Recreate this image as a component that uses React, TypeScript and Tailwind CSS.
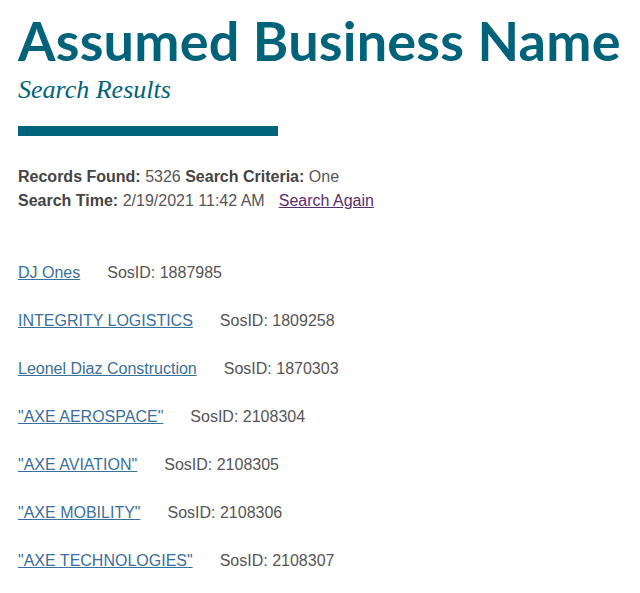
const results = [
  { name: "DJ Ones", id: "1887985" },
  { name: "INTEGRITY LOGISTICS", id: "1809258" },
  { name: "Leonel Diaz Construction", id: "1870303" },
  { name: '"AXE AEROSPACE"', id: "2108304" },
  { name: '"AXE AVIATION"', id: "2108305" },
  { name: '"AXE MOBILITY"', id: "2108306" },
  { name: '"AXE TECHNOLOGIES"', id: "2108307" },
];

export default function App() {
  return (
    <div className="min-h-[593px] bg-white px-[18px] pt-[11px] font-['Liberation_Sans',Arial,sans-serif] text-[16px] text-[#444]">
      <h1 className="font-['Lato',sans-serif] text-[54px] font-bold leading-[60px] tracking-[0.2px] text-[#00637a]">
        Assumed Business Name
      </h1>
      <h2 className="mt-[4px] font-['Liberation_Serif',Georgia,serif] text-[26px] italic leading-[30px] text-[#00637a]">
        Search Results
      </h2>
      <div className="mt-[21px] h-[10px] w-[260px] bg-[#00637a]" />

      <div className="mt-[29px] leading-[24px]">
        <div>
          <b>Records Found:</b> <span className="text-[#555]">5326</span> <b>Search Criteria:</b>{" "}
          <span className="text-[#555]">One</span>
        </div>
        <div>
          <b>Search Time:</b> <span className="text-[#555]">2/19/2021 11:42 AM</span>
          <a href="#" className="ml-[14px] text-[#5b2d6e] underline">
            Search Again
          </a>
        </div>
      </div>

      <div className="mt-[48px] flex flex-col gap-[24px] leading-[24px]">
        {results.map((r) => (
          <div key={r.id} className="flex">
            <a href="#" className="text-[#3a6f9a] underline">
              {r.name}
            </a>
            <span className="ml-[27px] text-[#555]">SosID: {r.id}</span>
          </div>
        ))}
      </div>
    </div>
  );
}
